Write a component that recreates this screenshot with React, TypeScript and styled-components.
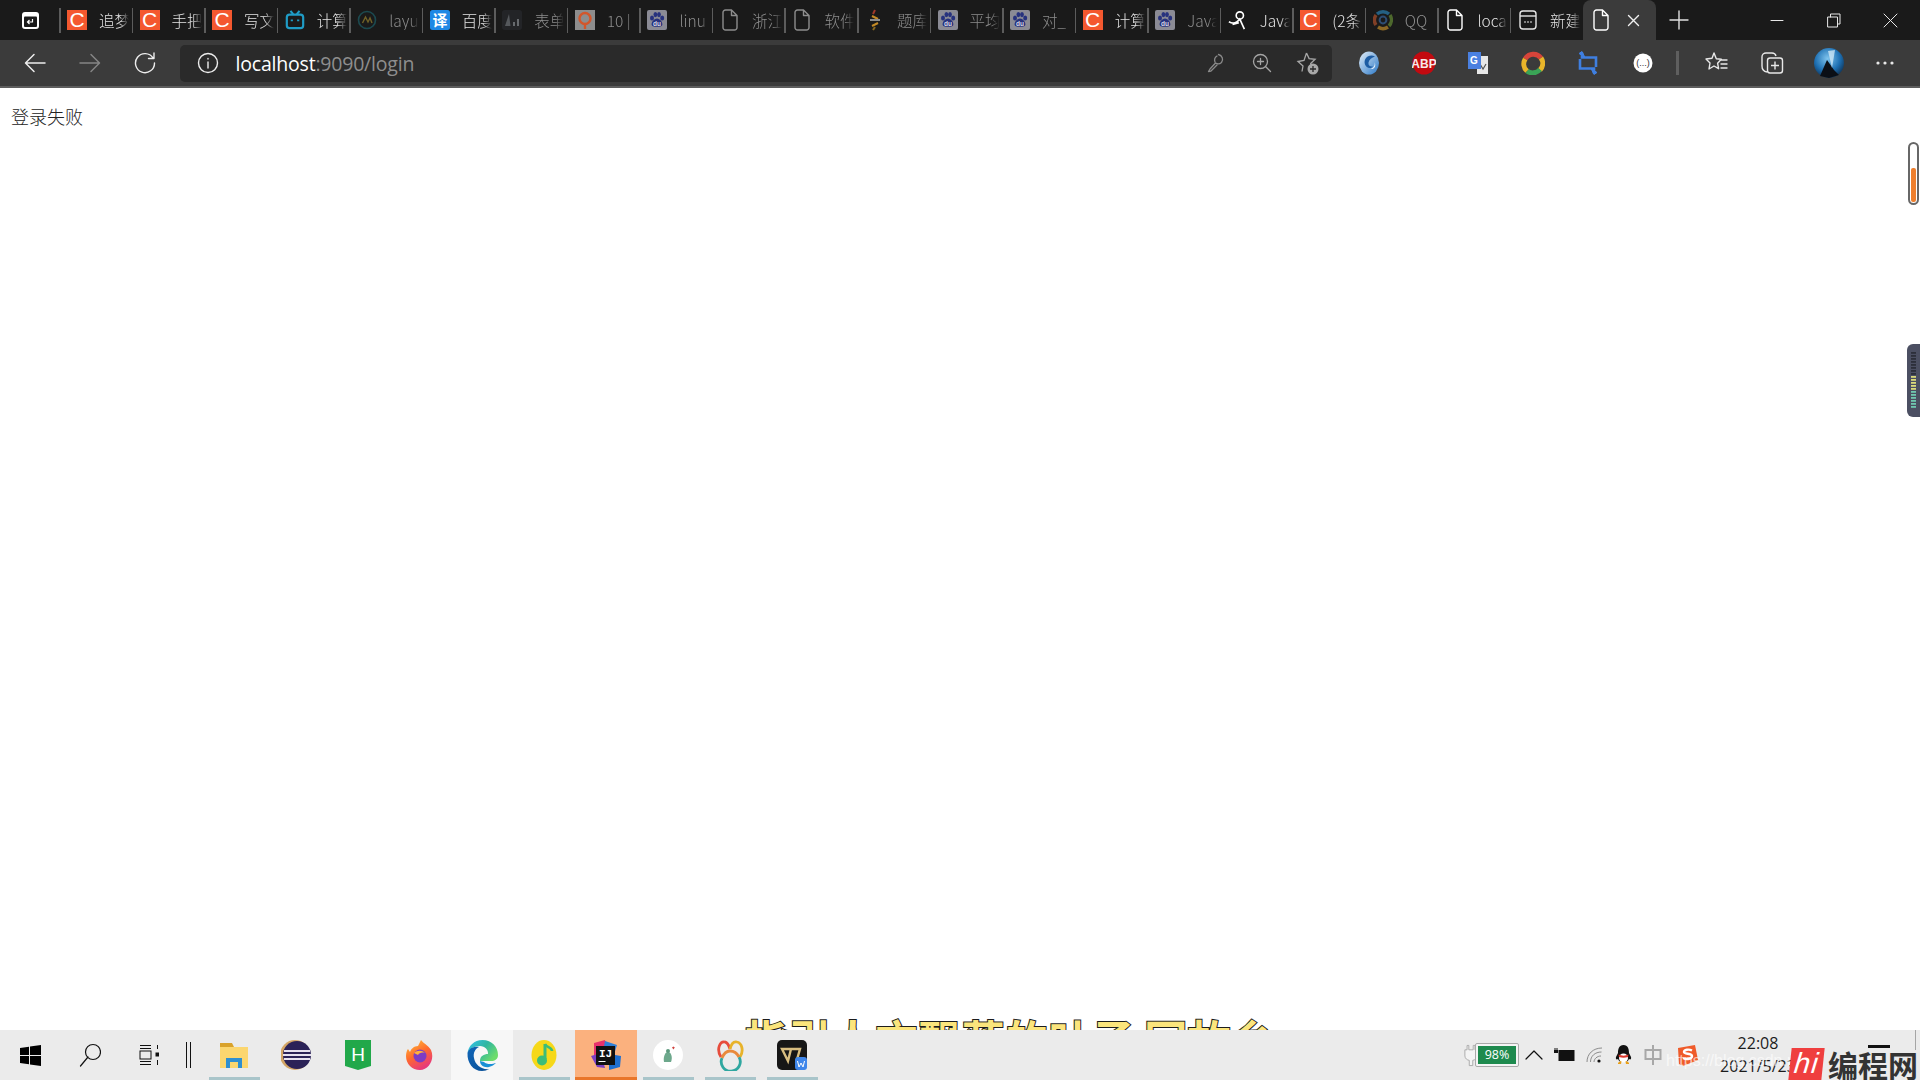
import React from "react";
import styled, { createGlobalStyle } from "styled-components";

const CJK = `"Noto Sans CJK SC", sans-serif`;
const UI = `"Open Sans", "Noto Sans CJK SC", sans-serif`;

const Global = createGlobalStyle`
  html, body { margin: 0; padding: 0; background: #fff; overflow: hidden; }
  * { box-sizing: border-box; }
`;

const Screen = styled.div`
  width: 1920px; height: 1080px; display: flex; flex-direction: column; overflow: hidden; position: relative;
  font-family: ${UI};
`;
const TabStrip = styled.div`
  height: 40px; background: #1a1a1a; display: flex; align-items: stretch; flex: none;
`;
const StripMenu = styled.div`
  width: 59px; padding-left: 2px; display: flex; align-items: center; justify-content: center; flex: none;
`;
const Tab = styled.div`
  width: 72.55px; flex: none; display: flex; align-items: center; gap: 12px; padding-left: 8px; position: relative;
  &::before { content: ""; position: absolute; left: 0; top: 8px; bottom: 7px; width: 1.5px; background: #5c5c5c; }
`;
const FavSlot = styled.span<{ $dim?: boolean }>`
  width: 20px; height: 20px; flex: none; display: flex; align-items: center; justify-content: center;
  opacity: ${p => (p.$dim ? 0.6 : 1)};
`;
const CsdnTile = styled.span`
  width: 20px; height: 20px; background: #f4582f; color: #fff; font: 400 21px/20px "Liberation Sans", sans-serif; text-align: center; display: block;
`;
const TabLabel = styled.span<{ $dim?: boolean }>`
  width: 30px; overflow: hidden; white-space: nowrap; font: 300 15.5px/20px ${CJK};
  color: ${p => (p.$dim ? "#8d8d8d" : "#e4e4e4")};
  -webkit-mask-image: linear-gradient(90deg, #000 70%, transparent 100%);
  mask-image: linear-gradient(90deg, #000 70%, transparent 100%);
`;
const ActiveTab = styled.div`
  width: 73px; margin-left: 0.5px; flex: none; background: #3b3b3b; border-radius: 8px 8px 0 0; display: flex; align-items: center; padding-left: 9px; gap: 17px;
`;
const NewTab = styled.div`
  width: 46px; flex: none; display: flex; align-items: center; justify-content: center;
`;
const WinControls = styled.div`
  margin-left: auto; display: flex; align-items: center; padding-right: 1px;
`;
const WinButton = styled.div<{ $w: number }>`
  width: ${p => p.$w}px; display: flex; justify-content: center; align-items: center;
`;

const Toolbar = styled.div`
  height: 48px; flex: none; background: #3b3b3b; border-bottom: 2px solid #5d5d5d; display: flex; align-items: center; padding-left: 7px;
`;
const NavButton = styled.div`
  width: 55px; height: 38px; flex: none; display: flex; align-items: center; justify-content: center;
`;
const AddressBar = styled.div`
  width: 1152px; height: 37px; margin-left: 8px; flex: none; background: #2a2a2a; border-radius: 5px; display: flex; align-items: center; padding-left: 17px;
`;
const UrlText = styled.div`
  margin-left: 16.5px; font-size: 19.5px; line-height: 37px; color: #8e8e8e; white-space: nowrap; letter-spacing: -0.2px;
`;
const Host = styled.span`
  color: #fff;
`;
const AddressTools = styled.div`
  margin-left: auto; display: flex; align-items: center; padding-right: 1px;
`;
const AddressTool = styled.div`
  width: 46px; height: 37px; display: flex; align-items: center; justify-content: center;
`;
const Extensions = styled.div`
  margin-left: 9.5px; display: flex; align-items: center;
`;
const ExtButton = styled.div`
  width: 54.8px; height: 38px; display: flex; align-items: center; justify-content: center;
`;
const ToolDivider = styled.div`
  width: 3px; height: 24px; margin: 0 8px 0 6px; background: #5f5f5f; flex: none;
`;
const ProfileButtons = styled.div`
  display: flex; align-items: center;
`;
const ProfileButton = styled.div`
  width: 56.5px; height: 38px; display: flex; align-items: center; justify-content: center;
`;

const Content = styled.main`
  flex: 1; background: #fff; position: relative; overflow: hidden; padding: 15px 0 0 11px;
`;
const Message = styled.div`
  font: 300 18px/26px ${CJK}; color: #222;
`;
const Lyric = styled.div`
  position: absolute; left: 745px; top: 919px; white-space: nowrap;
  font: 700 43px/62px ${CJK}; color: #fbe57c; -webkit-text-stroke: 2px #1c1c1c; paint-order: stroke fill; letter-spacing: 0.35px; word-spacing: -1px;
`;
const ScrollCapsule = styled.div`
  position: absolute; right: 1px; top: 54px; width: 11px; height: 63px; border: 2px solid #676767; border-radius: 6px; background: #fff; display: flex; flex-direction: column; justify-content: flex-end; padding: 1px;
`;
const CapsuleFill = styled.div`
  height: 34px; background: #ee7f2e; border-radius: 2px;
`;
const MeterPanel = styled.div`
  position: absolute; right: 0; top: 256px; width: 13px; height: 73px; background: #4b4f62; border-radius: 6px 0 0 6px; display: flex; justify-content: center; align-items: center;
`;

const Taskbar = styled.footer`
  height: 50px; flex: none; background: #ebebeb; display: flex; align-items: stretch; position: relative;
`;
const SystemButton = styled.div<{ $w: number }>`
  width: ${p => p.$w}px; flex: none; display: flex; align-items: center; justify-content: center;
`;
const TaskDivider = styled.div`
  width: 25px; padding-right: 5px; flex: none; display: flex; align-items: center; justify-content: center;
`;
const AppSlot = styled.div<{ $state?: "hot" | "open" }>`
  width: 62.05px; flex: none; display: flex; flex-direction: column; align-items: center;
  background: ${p => (p.$state === "hot" ? "#fbb17e" : p.$state === "open" ? "#f7f7f7" : "transparent")};
`;
const AppIcon = styled.div`
  flex: 1; padding-top: 3px; display: flex; align-items: center; justify-content: center;
`;
const AppMark = styled.div<{ $state?: "hot" | "open"; $on?: boolean }>`
  height: 3px; flex: none; width: ${p => (p.$state ? "100%" : "51px")};
  background: ${p => (p.$state === "hot" ? "#e9762a" : p.$on ? "#a9c5ca" : "transparent")};
`;
const Tray = styled.div`
  margin-left: auto; display: flex; align-items: center; padding-right: 124px;
`;
const TrayIcon = styled.div<{ $w: number }>`
  width: ${p => p.$w}px; height: 50px; flex: none; display: flex; align-items: center; justify-content: center;
`;
const BatteryBox = styled.div`
  width: 44px; height: 24px; border: 1px solid #a9a9a9; border-radius: 2px; padding: 2px; background: #f4f4f4; flex: none; margin-left: -3px;
`;
const BatteryLevel = styled.div`
  height: 100%; background: #1e8a4e; color: #fff; font: 400 12.5px/18px ${UI}; text-align: center;
`;
const Clock = styled.div`
  width: 76px; margin-left: 13px; color: #1c1c1c; font: 400 16px/23px "Open Sans", sans-serif; text-align: center; white-space: nowrap; flex: none;
`;
const FaintUrl = styled.div`
  position: absolute; left: 1666px; top: 20px; font: 400 16px/22px "Liberation Sans", sans-serif; color: rgba(255,255,255,.65); white-space: nowrap;
`;
const RightEdge = styled.div`
  position: absolute; left: 1915px; top: 0; width: 1px; height: 20px; background: #a5a5a5;
`;
const ActionBar = styled.div`
  position: absolute; left: 1868px; top: 15px; width: 22px; height: 3px; background: #111;
`;
const Watermark = styled.div`
  position: absolute; left: 1790px; top: 18px; height: 32px; display: flex; align-items: center;
`;
const HiBadge = styled.div`
  width: 33px; height: 32px; background: #ef3f3f; color: #fff; font: italic 400 29px/30px "Liberation Sans", sans-serif; text-align: center; letter-spacing: 1px; transform: skewX(-6deg);
`;
const SiteName = styled.div`
  margin-left: 5px; font: 700 30px/32px ${CJK}; color: #333; white-space: nowrap;
`;

/* ---------- drawn icons ---------- */
const Line = ({ w, h, c = "#fff", sw = 1.5, d }: { w: number; h: number; c?: string; sw?: number; d: string }) => (
  <svg width={w} height={h} viewBox={`0 0 ${w} ${h}`} fill="none" stroke={c} strokeWidth={sw} strokeLinecap="round" strokeLinejoin="round"><path d={d} /></svg>
);
const DocIcon = ({ c = "#fff" }: { c?: string }) => (
  <Line w={18} h={22} c={c} sw={1.4} d="M2 3.5a2.5 2.5 0 0 1 2.5-2.5h6L16 6.5v12a2.5 2.5 0 0 1-2.5 2.5h-9A2.5 2.5 0 0 1 2 18.5zM10.5 1v5.5H16" />
);
const StripMenuIcon = () => (
  <svg width="19" height="19" viewBox="0 0 19 19"><rect x="1" y="1" width="17" height="17" rx="3" fill="#fff" /><rect x="3" y="5.5" width="13" height="10.5" rx="1" fill="#1a1a1a" /><path d="M11.5 8v3h-5M8.5 9 6.5 11l2 2" stroke="#fff" strokeWidth="1.2" fill="none" /></svg>
);
const BiliIcon = () => (
  <svg width="22" height="22" viewBox="0 0 22 22" fill="none" stroke="#1f9cc6" strokeWidth="2.4"><path d="M6 1l3 3.5M16 1l-3 3.5" /><rect x="2" y="5" width="18" height="15" rx="3" /><path d="M7.5 10.5v2M14.5 10.5v2" /></svg>
);
const LayuiIcon = () => (
  <svg width="20" height="20" viewBox="0 0 20 20" fill="none"><circle cx="10" cy="10" r="8.5" stroke="#1d6a73" strokeWidth="1.6" /><path d="M5.5 13l3-6 2.5 5 2-4 2 5" stroke="#a8912f" strokeWidth="1.4" /></svg>
);
const YiIcon = () => (
  <svg width="20" height="20" viewBox="0 0 20 20"><rect width="20" height="20" rx="2.5" fill="#1e88e5" /><text x="10" y="15.5" textAnchor="middle" fontSize="15" fontFamily='"Noto Sans CJK SC"' fontWeight="700" fill="#fff">译</text></svg>
);
const ChartIcon = () => (
  <svg width="20" height="20" viewBox="0 0 20 20"><rect width="20" height="20" rx="3" fill="#2a2b31" /><path d="M3 16 7 4l1.5 12z" fill="#7d8288" /><path d="M11 12h2v4h-2zM15 9h2v7h-2z" fill="#9aa0a6" /></svg>
);
const QIcon = () => (
  <svg width="20" height="20" viewBox="0 0 20 20"><rect width="20" height="20" fill="#8d8d8d" /><circle cx="10" cy="8.5" r="5.5" fill="none" stroke="#d2562b" strokeWidth="2.4" /><path d="M10 14v5" stroke="#d2562b" strokeWidth="2.4" /></svg>
);
const BaiduIcon = () => (
  <svg width="20" height="20" viewBox="0 0 20 20"><rect width="20" height="20" rx="2" fill="#8b8b95" /><g fill="#27327e"><ellipse cx="5" cy="8" rx="2" ry="2.6" /><ellipse cx="8.4" cy="4.6" rx="1.9" ry="2.6" /><ellipse cx="12" cy="4.6" rx="1.9" ry="2.6" /><ellipse cx="15.2" cy="8" rx="2" ry="2.6" /><path d="M10 8.5c3 0 6 4 5.3 6.6-.6 2.2-3.4 1.6-5.3 1.6s-4.7.6-5.3-1.6C4 12.5 7 8.5 10 8.5z" /></g><text x="10" y="16" textAnchor="middle" fontSize="6.500" fontWeight="700" fontFamily='"Liberation Sans"' fill="#d8d8e4">du</text></svg>
);
const TiIcon = () => (
  <svg width="14" height="22" viewBox="0 0 14 22" fill="none" strokeWidth="2"><path d="M7 1 5 5" stroke="#a33a2a" /><path d="M4 7l6 3" stroke="#c48a26" /><path d="M2 11h10" stroke="#8d8d8d" /><path d="M10 14l-6 3" stroke="#c48a26" /><path d="M7 18l-2 3" stroke="#8a6a20" /></svg>
);
const JavaIcon = () => (
  <svg width="22" height="22" viewBox="0 0 22 22" fill="none" stroke="#fff" strokeWidth="1.8"><circle cx="13" cy="6" r="4" /><path d="M1 13c5 3 9 1 12-3l5 11M5 16l7-2" /></svg>
);
const QQBrowser = () => (
  <svg width="20" height="22" viewBox="0 0 20 22" fill="none" strokeWidth="3.4"><path d="M4 5a9 9 0 0 1 12 0" stroke="#2c8fc9" /><path d="M17 6a9 9 0 0 1-1 11" stroke="#6f9c39" /><path d="M15 18a9 9 0 0 1-10 0" stroke="#d99c2d" /><path d="M3 16A9 9 0 0 1 3 6" stroke="#c6592e" /><circle cx="10" cy="11" r="3.4" stroke="#3b6fb0" strokeWidth="2" /></svg>
);
const NewDocIcon = () => (
  <svg width="18" height="20" viewBox="0 0 18 20" fill="none" stroke="#e6e6e6" strokeWidth="1.4"><rect x="1" y="1" width="16" height="18" rx="3" /><path d="M1 6h16" /><path d="M5.5 12h1M8.5 12h1M11.5 12h1" strokeWidth="1.8" /></svg>
);
const KeyIcon = () => (
  <Line w={18} h={20} c="#8a8a8a" sw={1.3} d="M11.5 1.5a5 5 0 0 1 3 8 5 5 0 0 1-6 .5L3 16l-1.5 2.5L4 18l6-6M10 3a5 5 0 0 0-2 6" />
);
const ZoomIcon = () => (
  <Line w={20} h={20} c="#a5a5a5" sw={1.3} d="M8.5 1.5a7 7 0 1 1 0 14 7 7 0 0 1 0-14zM13.5 13.5l5 5M8.5 5.5v6M5.5 8.5h6" />
);
const FavAddIcon = () => (
  <svg width="24" height="24" viewBox="0 0 24 24" fill="none"><path d="M10.5 2l2.6 5.6 6 .7-4.4 4.2 1 4.5M6 20.5l1-5.5-5-4.5 6-1L10.5 2" stroke="#a8a8a8" strokeWidth="1.3" /><circle cx="17" cy="18" r="5.5" fill="#a8a8a8" /><path d="M17 15v6M14 18h6" stroke="#2a2a2a" strokeWidth="1.3" /></svg>
);
const SphereIcon = () => (
  <svg width="22" height="24" viewBox="0 0 22 24"><defs><linearGradient id="sph" x1="0" y1="0" x2="1" y2="1"><stop offset="0" stopColor="#e4eff9" /><stop offset="1" stopColor="#2a78c8" /></linearGradient></defs><ellipse cx="11" cy="12" rx="10" ry="11.5" fill="url(#sph)" /><path d="M17 5.500c-6-3-12 2-10 8 1 3 5 5 8 2-3 .5-5-1-4.500-4 .5-3 3.500-5 6.500-6z" fill="#1d5ca3" /><path d="M16.500 11c1 3-1 6-4 7 4 .5 6-3 4-7z" fill="#eaf3fb" /></svg>
);
const AbpIcon = () => (
  <svg width="24" height="24" viewBox="0 0 24 24"><circle cx="12" cy="12" r="11.5" fill="#c30a10" /><text x="12" y="16.5" textAnchor="middle" fontSize="12" fontWeight="700" fontFamily='"Liberation Sans"' fill="#f7e9e9">ABP</text></svg>
);
const TranslateIcon = () => (
  <svg width="22" height="24" viewBox="0 0 22 24"><path d="M10 5h11v18H10z" fill="#e7e7e7" /><path d="M13 13l3 5 3-5" stroke="#555" strokeWidth="1.2" fill="none" /><path d="M1 1h13v17H1z" fill="#4a80e0" /><text x="7" y="13" textAnchor="middle" fontSize="10" fontWeight="700" fontFamily='"Liberation Sans"' fill="#fff">G</text></svg>
);
const RingIcon = () => (
  <svg width="24" height="24" viewBox="0 0 24 24" fill="none" strokeWidth="5"><path d="M4.2 8A9.5 9.5 0 0 1 20 7" stroke="#d6443a" /><path d="M20 7a9.5 9.5 0 0 1-1 12" stroke="#e9b52a" /><path d="M19 18.5a9.5 9.5 0 0 1-13 1.5" stroke="#3aa456" /><path d="M6 20A9.5 9.5 0 0 1 4.2 8" stroke="#e9b52a" /><circle cx="12" cy="12" r="4.6" fill="#3b3b3b" stroke="#3a3a3a" strokeWidth="1" /></svg>
);
const RepeatIcon = () => (
  <svg width="20" height="24" viewBox="0 0 20 24" fill="none" stroke="#3f7fe0" strokeWidth="2.6"><path d="M4 1.5v5h14v9.5M16 22.5v-5H2V8" /><path d="M1 2.5l3-2 3 6zM19 21.5l-3 2-3-6z" fill="#3f7fe0" strokeWidth="1" /></svg>
);
const BubbleIcon = () => (
  <svg width="20" height="20" viewBox="0 0 20 20"><circle cx="10" cy="10" r="9.5" fill="#fff" /><text x="10" y="13" textAnchor="middle" fontSize="9" fontFamily='"Liberation Sans"' fill="#333">(...)</text></svg>
);
const FavListIcon = () => (
  <Line w={24} h={24} c="#e8e8e8" sw={1.4} d="M10 2l2.3 5.7 5 .5-3.7 4 1 5.5L10 15l-5 3 1-6-4-4 6-.7zM16 9h7M17 13h6M17 17h6" />
);
const CollectIcon = () => (
  <svg width="24" height="24" viewBox="0 0 24 24" fill="none" stroke="#e8e8e8" strokeWidth="1.4"><path d="M7 21c-3-.5-5-3-5-6V6c0-2.5 2-4 4-4h6c2 0 3.5 1 4 3" /><rect x="7.5" y="7" width="15" height="15" rx="2.5" /><path d="M15 10.5v8M11 14.5h8" /></svg>
);
const AvatarIcon = () => (
  <svg width="30" height="30" viewBox="0 0 30 30"><defs><radialGradient id="av" cx=".45" cy=".35" r=".7"><stop offset="0" stopColor="#7fc4ee" /><stop offset=".6" stopColor="#1d6fb2" /><stop offset="1" stopColor="#0e2a48" /></radialGradient></defs><circle cx="15" cy="15" r="15" fill="url(#av)" /><path d="M6 28 13 12l7 10 5 5-10 3z" fill="#0b0f16" /><path d="M14 3l4 17 3-18z" fill="#d7ecf8" opacity=".75" /></svg>
);
const DotsIcon = () => (
  <svg width="20" height="4" viewBox="0 0 20 4" fill="#e8e8e8"><circle cx="3" cy="2" r="1.6" /><circle cx="10" cy="2" r="1.6" /><circle cx="17" cy="2" r="1.6" /></svg>
);

const WinLogo = () => (
  <svg width="21" height="21" viewBox="0 0 21 21" fill="#000"><path d="M0 3l9-1.3V10H0zM10 1.5 21 0v10H10zM0 11h9v8.3L0 18zM10 11h11v10l-11-1.5z" /></svg>
);
const SearchIcon = () => (
  <Line w={22} h={24} c="#111" sw={1.2} d="M14 1.5a7.5 7.5 0 1 1 0 15 7.5 7.5 0 0 1 0-15zM9 14 1.5 23" />
);
const TaskViewIcon = () => (
  <svg width="20" height="20" viewBox="0 0 20 20" fill="none" stroke="#111" strokeWidth="1"><path d="M1 .5h11M1 19.5h11M1 16.5h11M1 3.5h11" /><rect x="1" y="6" width="11" height="8" /><path d="M18.5 0v4M18.5 15v5" /><rect x="17" y="8" width="3" height="3" fill="#111" /></svg>
);
const TaskSeparator = () => (
  <svg width="5" height="26" viewBox="0 0 5 26" stroke="#111" strokeWidth="1"><path d="M.5 0v26M4.5 0v26" /></svg>
);
const FolderIcon = () => (
  <svg width="28" height="28" viewBox="0 0 28 28"><path d="M0 2h12l2 4H0z" fill="#d9a22b" /><path d="M0 6h28v21H0z" fill="#fbd66f" /><path d="M6 27V17h16v10h-4v-6h-8v6z" fill="#2f8fd0" /></svg>
);
const EclipseIcon = () => (
  <svg width="30" height="30" viewBox="0 0 30 30"><circle cx="14" cy="15" r="15" fill="#d3a565" /><circle cx="16" cy="15" r="14" fill="#2b2257" /><path d="M3 11h26M2 15h28M3 19h26" stroke="#e7e2f0" strokeWidth="2" /></svg>
);
const HBuilderIcon = () => (
  <svg width="26" height="30" viewBox="0 0 26 30"><path d="M0 0h26v26l-13 4-13-4z" fill="#21a84a" /><text x="13" y="21" textAnchor="middle" fontSize="19" fontWeight="400" fontFamily='"Liberation Sans"' fill="#fff">H</text></svg>
);
const FirefoxIcon = () => (
  <svg width="28" height="30" viewBox="0 0 28 30"><defs><linearGradient id="ff" x1="0" y1="0" x2=".5" y2="1"><stop offset="0" stopColor="#ffc83a" /><stop offset=".55" stopColor="#ff6a2d" /><stop offset="1" stopColor="#e83a7a" /></linearGradient></defs><path d="M14 30C6 30 0 24 0 16c0-3 1-6 2-7l2 3c1-3 4-6 8-6l3-6c2 3 7 5 10 10 4 9-2 20-11 20z" fill="url(#ff)" /><circle cx="14" cy="16" r="6.5" fill="#7d3cc4" /><path d="M8 13c3-3 8-3 11 0-3-1-6 0-7 2z" fill="#ffb13a" /></svg>
);
const EdgeIcon = () => (
  <svg width="31" height="31" viewBox="0 0 31 31"><defs><linearGradient id="eg" x1="0" y1="0" x2="1" y2=".6"><stop offset="0" stopColor="#35c1f1" /><stop offset=".55" stopColor="#2fb6a0" /><stop offset="1" stopColor="#6ddc6b" /></linearGradient><linearGradient id="eb" x1="0" y1="0" x2="1" y2="1"><stop offset="0" stopColor="#1166b8" /><stop offset="1" stopColor="#0a4f96" /></linearGradient></defs><path d="M15.5 0C25 0 31 7 31 15c0 4-3 6-7 6H13c0-5 4-7 8-7 .5-4-3-8-8-8C7 6 2 9 .5 13 1.5 6 7 0 15.5 0z" fill="url(#eg)" /><path d="M.5 13C2 8 7 6 12 7c-4 2-6 6-5 11 1 7 8 12 15 11-2 1-4 2-7 2C6 31 0 23 .5 13z" fill="url(#eb)" /><path d="M13 21c0 4 4 7 9 6 3-1 5-2 7-4-3 1-9 2-12-1-1 0-3-1-4-1z" fill="#1a8fd6" /></svg>
);
const QQMusicIcon = () => (
  <svg width="26" height="30" viewBox="0 0 26 30"><ellipse cx="13" cy="15" rx="12.5" ry="15" fill="#f6d819" /><path d="M14 4v15" stroke="#3cbd78" strokeWidth="3" /><circle cx="11" cy="20.5" r="5" fill="#3cbd78" /><path d="M14 4c2 4 7 3 7 7" stroke="#3cbd78" strokeWidth="2.6" fill="none" /></svg>
);
const IdeaIcon = () => (
  <svg width="30" height="30" viewBox="0 0 30 30"><path d="M3 3 14 0l3 14-14 3z" fill="#e8326d" /><path d="M14 1 26 5 22 18 12 12z" fill="#2d7fd8" /><path d="M0 16l10-3 4 15-8-1z" fill="#7a3fc4" /><path d="M18 14l12 2-1 11-11 3z" fill="#1f6fd0" /><rect x="5" y="6" width="19" height="19" fill="#111" /><text x="14.5" y="17" textAnchor="middle" fontSize="11" fontWeight="700" fontFamily='"Liberation Mono"' fill="#fff">IJ</text><path d="M7.5 21.5h7" stroke="#fff" strokeWidth="1" /></svg>
);
const GhostIcon = () => (
  <svg width="30" height="30" viewBox="0 0 30 30"><circle cx="15" cy="15" r="15" fill="#fff" /><path d="M11 22c-1-5 1-10 4-10s5 5 3 10z" fill="#6da88c" /><circle cx="15" cy="11" r="2" fill="#5d9a7e" /><path d="M19 7.5l1.4-1 1.4 1-1.4 2z" fill="#d0433f" /></svg>
);
const NavicatIcon = () => (
  <svg width="29" height="31" viewBox="0 0 29 31" fill="none" strokeWidth="2.8"><path d="M5 17C0 9 4 1 9 2c3 .5 4 4 5 7" stroke="#e74c3c" /><path d="M14 9c1-4 3-8 7-7 5 1 7 9 3 15" stroke="#e8b32a" /><path d="M6 18a9.5 9.5 0 1 0 17-1" stroke="#2fa7a0" /><path d="M6 18c2-5 5-7 8-7s7 2 9 6" stroke="#e98a3c" /></svg>
);
const WpsIcon = () => (
  <svg width="30" height="30" viewBox="0 0 30 30"><rect width="30" height="30" rx="5" fill="#161616" /><path d="M5 9h9l-3 12zM13 9h10l-4 14" fill="none" stroke="#d7bd80" strokeWidth="2.4" /><rect x="18" y="17" width="12" height="13" rx="3" fill="#3f86ea" /><path d="M20.5 21l1.5 6 2-4 2 4 1.5-6" stroke="#fff" fill="none" strokeWidth="1" /></svg>
);
const PlugIcon = () => (
  <svg width="16" height="25" viewBox="0 0 16 25" fill="#f4f4f4" stroke="#a5a5a5" strokeWidth="1"><path d="M3.5 1h2v5h5V1h2v5H15v7c0 3-3 5-5 5v6H6v-6c-2 0-5-2-5-5V6h2.5z" /></svg>
);
const ChevronIcon = () => <Line w={18} h={10} c="#111" sw={1.2} d="M1 9l8-8 8 8" />;
const PowerIcon = () => (
  <svg width="21" height="14" viewBox="0 0 21 14" fill="#111"><rect x="5" y="2.5" width="15" height="10" stroke="#111" fill="#111" /><path d="M0 2h4v3H0z" /><path d="M1 0v2M3 0v2" stroke="#111" /></svg>
);
const WifiIcon = () => (
  <svg width="17" height="16" viewBox="0 0 17 16" fill="none" stroke="#8c8c8c" strokeWidth="1"><path d="M1 15C1 7 7 1 16 1M4.5 15c0-6 4.5-10 11-10M8 15c0-3 3-6 7-6" /><circle cx="13" cy="14" r="1.6" fill="#111" stroke="none" /></svg>
);
const QQIcon = () => (
  <svg width="17" height="20" viewBox="0 0 17 20"><path d="M8.5 0C4 0 3 4 3 8L1 12c-.5 2 .5 3 2 2 .6 1 1 2 2 2.6h7c1-.6 1.4-1.6 2-2.6 1.5 1 2.5 0 2-2l-2-4c0-4-1-8-5.500-8z" fill="#111" /><ellipse cx="8.5" cy="13" rx="4.500" ry="4.500" fill="#fff" /><path d="M3.500 9.500c3 1.500 7 1.500 10 0l-.5 2.500c-3 1-6 1-9 0z" fill="#d9352a" /><path d="M3 18c1-1.500 3-2 3.500-1.500L6 19H3zM14 18c-1-1.500-3-2-3.500-1.500L11 19h3z" fill="#eaa11a" /></svg>
);
const ImeIcon = () => (
  <svg width="18" height="20" viewBox="0 0 18 20" fill="none" stroke="#a8a8a8" strokeWidth="2"><rect x="1.5" y="5" width="15" height="9" /><path d="M9 0v20" /></svg>
);
const SogouIcon = () => (
  <svg width="21" height="21" viewBox="0 0 21 21"><path d="M1 3 18 0l3 15-15 6-4-2z" fill="#ef5b2a" /><path d="M15 5.500c-3-1.500-8-1-8 1.500s8 1 8 4-5 4-9 2" fill="none" stroke="#fff" strokeWidth="2.400" /></svg>
);
const Meter = () => (
  <svg width="5" height="57" viewBox="0 0 5 57">
    {Array.from({ length: 19 }, (_, i) => (
      <rect key={i} y={i * 3} width="5" height="1.8" fill={i < 8 ? "#2c2f3a" : i < 13 ? "#d9d97a" : "#6fc7b0"} />
    ))}
  </svg>
);

type TabData = { label: string; icon: React.ReactNode; dim?: boolean; iconDim?: boolean };
const Csdn = <CsdnTile>C</CsdnTile>;
const tabs: TabData[] = [
  { label: "追梦", icon: Csdn },
  { label: "手把", icon: Csdn },
  { label: "写文", icon: Csdn },
  { label: "计算", icon: <BiliIcon /> },
  { label: "layu", icon: <LayuiIcon />, dim: true, iconDim: true },
  { label: "百度", icon: <YiIcon /> },
  { label: "表单", icon: <ChartIcon />, dim: true, iconDim: true },
  { label: "10 |", icon: <QIcon />, dim: true },
  { label: "linu", icon: <BaiduIcon />, dim: true },
  { label: "浙江", icon: <DocIcon c="#8d8d8d" />, dim: true },
  { label: "软件", icon: <DocIcon c="#8d8d8d" />, dim: true },
  { label: "题库", icon: <TiIcon />, dim: true },
  { label: "平均", icon: <BaiduIcon />, dim: true },
  { label: "对_", icon: <BaiduIcon />, dim: true },
  { label: "计算", icon: Csdn },
  { label: "Java", icon: <BaiduIcon />, dim: true },
  { label: "Java", icon: <JavaIcon /> },
  { label: "(2条", icon: Csdn },
  { label: "QQ", icon: <QQBrowser />, dim: true, iconDim: true },
  { label: "loca", icon: <DocIcon /> },
  { label: "新建", icon: <NewDocIcon /> },
];

type AppData = { icon: React.ReactNode; on?: boolean; state?: "hot" | "open" };
const apps: AppData[] = [
  { icon: <FolderIcon />, on: true },
  { icon: <EclipseIcon /> },
  { icon: <HBuilderIcon /> },
  { icon: <FirefoxIcon /> },
  { icon: <EdgeIcon />, state: "open" },
  { icon: <QQMusicIcon />, on: true },
  { icon: <IdeaIcon />, state: "hot" },
  { icon: <GhostIcon />, on: true },
  { icon: <NavicatIcon />, on: true },
  { icon: <WpsIcon />, on: true },
];

export default function App() {
  return (
    <Screen>
      <Global />
      <TabStrip>
        <StripMenu><StripMenuIcon /></StripMenu>
        {tabs.map((t, i) => (
          <Tab key={i}>
            <FavSlot $dim={t.iconDim}>{t.icon}</FavSlot>
            <TabLabel $dim={t.dim}>{t.label}</TabLabel>
          </Tab>
        ))}
        <ActiveTab>
          <DocIcon />
          <Line w={13} h={13} c="#f0f0f0" sw={1.4} d="M1.500 1.500l10 10M11.500 1.500l-10 10" />
        </ActiveTab>
        <NewTab><Line w={20} h={20} c="#e0e0e0" sw={1.4} d="M10 1v18M1 10h18" /></NewTab>
        <WinControls>
          <WinButton $w={57}><Line w={14} h={3} c="#e8e8e8" sw={1} d="M1 1.500h12" /></WinButton>
          <WinButton $w={57}><Line w={14} h={15} c="#e8e8e8" sw={1} d="M1 4h9.500v10H1zM3.500 4V1H13v10h-2.500" /></WinButton>
          <WinButton $w={57}><Line w={15} h={15} c="#e8e8e8" sw={1} d="M1 1l13 13M14 1 1 14" /></WinButton>
        </WinControls>
      </TabStrip>

      <Toolbar>
        <NavButton><Line w={22} h={20} c="#ededed" sw={1.5} d="M21 10H2M10 1.500 1.500 10l8.500 8.500" /></NavButton>
        <NavButton><Line w={22} h={20} c="#858585" sw={1.5} d="M1 10h19M12 1.500l8.500 8.500-8.500 8.500" /></NavButton>
        <NavButton><Line w={22} h={22} c="#ededed" sw={1.4} d="M19 6A9.500 9.500 0 1 0 20.500 11M20 1v5.500h-5.500" /></NavButton>
        <AddressBar>
          <Line w={22} h={22} c="#ededed" sw={1.4} d="M11 1.500a9.500 9.500 0 1 1 0 19 9.500 9.500 0 0 1 0-19zM11 10v6M11 6.500v.6" />
          <UrlText><Host>localhost</Host>:9090/login</UrlText>
          <AddressTools>
            <AddressTool><KeyIcon /></AddressTool>
            <AddressTool><ZoomIcon /></AddressTool>
            <AddressTool><FavAddIcon /></AddressTool>
          </AddressTools>
        </AddressBar>
        <Extensions>
          <ExtButton><SphereIcon /></ExtButton>
          <ExtButton><AbpIcon /></ExtButton>
          <ExtButton><TranslateIcon /></ExtButton>
          <ExtButton><RingIcon /></ExtButton>
          <ExtButton><RepeatIcon /></ExtButton>
          <ExtButton><BubbleIcon /></ExtButton>
        </Extensions>
        <ToolDivider />
        <ProfileButtons>
          <ProfileButton><FavListIcon /></ProfileButton>
          <ProfileButton><CollectIcon /></ProfileButton>
          <ProfileButton><AvatarIcon /></ProfileButton>
          <ProfileButton><DotsIcon /></ProfileButton>
        </ProfileButtons>
      </Toolbar>

      <Content>
        <Message>登录失败</Message>
        <ScrollCapsule><CapsuleFill /></ScrollCapsule>
        <MeterPanel><Meter /></MeterPanel>
        <Lyric>指引人方飘落的叶子 回故乡</Lyric>
      </Content>

      <Taskbar>
        <SystemButton $w={60}><WinLogo /></SystemButton>
        <SystemButton $w={60}><SearchIcon /></SystemButton>
        <SystemButton $w={58}><TaskViewIcon /></SystemButton>
        <TaskDivider><TaskSeparator /></TaskDivider>
        {apps.map((a, i) => (
          <AppSlot key={i} $state={a.state}>
            <AppIcon>{a.icon}</AppIcon>
            <AppMark $state={a.state} $on={a.on} />
          </AppSlot>
        ))}
        <Tray>
          <TrayIcon $w={14}><PlugIcon /></TrayIcon>
          <BatteryBox><BatteryLevel>98%</BatteryLevel></BatteryBox>
          <TrayIcon $w={30}><ChevronIcon /></TrayIcon>
          <TrayIcon $w={30}><PowerIcon /></TrayIcon>
          <TrayIcon $w={30}><WifiIcon /></TrayIcon>
          <TrayIcon $w={29}><QQIcon /></TrayIcon>
          <TrayIcon $w={29}><ImeIcon /></TrayIcon>
          <TrayIcon $w={40}><SogouIcon /></TrayIcon>
          <Clock>22:08<br />2021/5/23</Clock>
        </Tray>
        <FaintUrl>https://blog.csdn.net/</FaintUrl>
        <ActionBar />
        <RightEdge />
        <Watermark>
          <HiBadge>hi</HiBadge>
          <SiteName>编程网</SiteName>
        </Watermark>
      </Taskbar>
    </Screen>
  );
}
